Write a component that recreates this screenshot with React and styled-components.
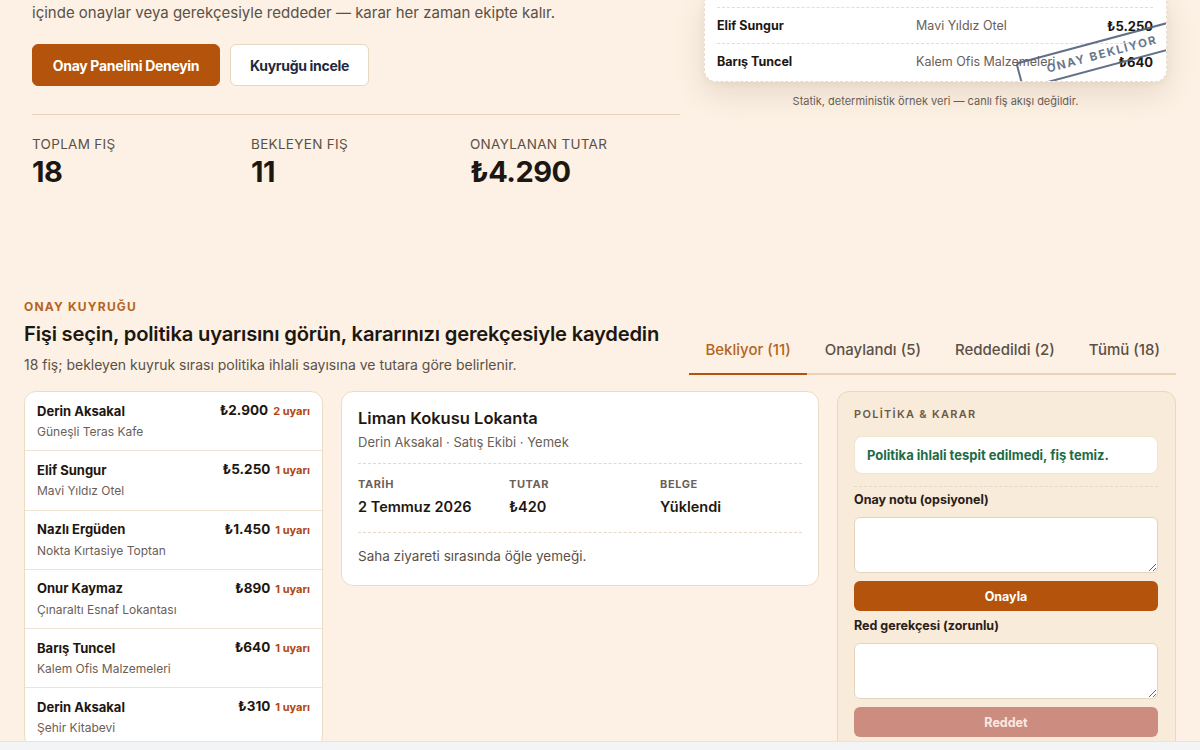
import React from "react";
import styled, { createGlobalStyle } from "styled-components";

const Global = createGlobalStyle`
  * { box-sizing: border-box; }
  html, body { margin: 0; padding: 0; }
  body {
    background: #fcf1e4;
    font-family: Inter, "Noto Sans", sans-serif;
    color: #1d1712;
    overflow: hidden;
  }
`;

const Page = styled.div`
  min-height: 750px;
`;

const Hero = styled.section`
  display: grid;
  grid-template-columns: minmax(0, 1fr) 463px;
  gap: 24px;
  padding: 0 33px 0 32px;
  align-items: start;
`;

const HeroLeft = styled.div`
  display: flex;
  flex-direction: column;
  min-width: 0;
`;

const Lead = styled.p`
  margin: 0;
  font-size: 15px;
  line-height: 25px;
  color: #5b5047;
`;

const ButtonRow = styled.div`
  display: flex;
  gap: 10px;
  margin-top: 19px;
`;

const HeroButton = styled.button`
  height: 42px;
  padding: 0;
  border-radius: 6px;
  font-family: Inter, sans-serif;
  font-size: 14px;
  font-weight: 700;
  letter-spacing: -0.3px;
  white-space: nowrap;
  cursor: pointer;
  border: 1px solid ${(p) => (p.$primary ? "#b4530c" : "#e7d6c1")};
  background: ${(p) => (p.$primary ? "#b4530c" : "#ffffff")};
  color: ${(p) => (p.$primary ? "#ffffff" : "#1f2a40")};
  width: ${(p) => p.$w}px;
`;

const Divider = styled.hr`
  border: 0;
  border-top: 1px solid #e6d4bd;
  margin: 28px 0 0;
`;

const Stats = styled.div`
  display: grid;
  grid-template-columns: 219px 219px 1fr;
  padding-top: 19px;
`;

const Stat = styled.div`
  display: flex;
  flex-direction: column;
`;

const StatLabel = styled.div`
  font-size: 13.5px;
  line-height: 20px;
  letter-spacing: 0.3px;
  color: #5b5047;
  text-transform: uppercase;
`;

const StatValue = styled.div`
  font-size: 29px;
  line-height: 36px;
  font-weight: 700;
  letter-spacing: -0.5px;
  color: #1d1712;
`;

const HeroRight = styled.div`
  display: flex;
  flex-direction: column;
  align-items: stretch;
`;

const ReceiptCard = styled.div`
  position: relative;
  overflow: hidden;
  margin-top: -8px;
  background: #ffffff;
  border: 1px dashed #e9dccb;
  border-radius: 12px;
  padding: 14px 13px 2px 12px;
  box-shadow: 0 12px 30px rgba(110, 80, 40, 0.14), 0 2px 6px rgba(110, 80, 40, 0.06);
`;

const ReceiptRow = styled.div`
  display: grid;
  grid-template-columns: 196px 1fr auto;
  align-items: center;
  height: 36px;
  font-size: 12.5px;
  border-top: 1px dashed #e6dccf;
`;

const RName = styled.span`
  font-weight: 700;
  color: #1d1712;
`;

const RMerchant = styled.span`
  color: #6a6057;
  padding-left: 3px;
`;

const RAmount = styled.span`
  font-weight: 700;
  font-size: 13px;
  color: #1d1712;
`;

const Stamp = styled.div`
  position: absolute;
  left: 311px;
  top: 47px;
  width: 172px;
  height: 28px;
  border: 2px solid #52627a;
  border-radius: 4px;
  transform: rotate(-15deg);
  display: flex;
  align-items: center;
  justify-content: center;
  font-size: 11.5px;
  font-weight: 700;
  letter-spacing: 1.6px;
  color: #5a6a82;
  opacity: 0.9;
`;

const Caption = styled.div`
  margin-top: 11px;
  text-align: center;
  font-size: 11px;
  line-height: 16px;
  color: #6a6057;
`;

const Queue = styled.section`
  padding: 109px 24px 0;
`;

const QueueHeader = styled.div`
  display: flex;
  justify-content: space-between;
  align-items: flex-end;
`;

const HeaderText = styled.div`
  display: flex;
  flex-direction: column;
`;

const Eyebrow = styled.div`
  font-size: 12px;
  line-height: 16px;
  font-weight: 700;
  letter-spacing: 1.2px;
  color: #b4651f;
`;

const Title = styled.h2`
  margin: 5px 0 0;
  font-size: 20.2px;
  line-height: 28px;
  font-weight: 600;
  letter-spacing: -0.2px;
  color: #1d1712;
`;

const Sub = styled.p`
  margin: 7px 0 0;
  font-size: 14px;
  line-height: 20px;
  color: #5b5047;
`;

const Tabs = styled.div`
  display: flex;
  gap: 2px;
  border-bottom: 2px solid #ead4b4;
`;

const Tab = styled.button`
  background: none;
  border: 0;
  border-bottom: 2px solid ${(p) => (p.$active ? "#b4530c" : "transparent")};
  margin-bottom: -2px;
  padding: 12px 16px 12px;
  font-family: Inter, sans-serif;
  font-size: 15px;
  line-height: 22px;
  font-weight: 500;
  color: ${(p) => (p.$active ? "#b4651f" : "#5b5047")};
  cursor: pointer;
`;

const Grid = styled.div`
  display: grid;
  grid-template-columns: 299px minmax(0, 1fr) 339px;
  gap: 18px;
  margin-top: 16px;
  align-items: start;
`;

const ListCard = styled.div`
  background: #ffffff;
  border: 1px solid #ecdcc6;
  border-radius: 12px;
  overflow: hidden;
`;

const ListRow = styled.div`
  display: flex;
  flex-direction: column;
  gap: 4px;
  padding: 9px 12px 10.25px;
  border-top: ${(p) => (p.$first ? "0" : "1px solid #efe3d3")};
`;

const ListTop = styled.div`
  display: flex;
  align-items: center;
  justify-content: space-between;
  line-height: 18px;
`;

const ListName = styled.span`
  font-size: 13px;
  font-weight: 700;
  color: #1d1712;
`;

const ListRight = styled.span`
  display: flex;
  align-items: baseline;
  gap: 5px;
`;

const ListAmount = styled.span`
  font-size: 13.5px;
  font-weight: 700;
  color: #1d1712;
`;

const Warn = styled.span`
  font-size: 11px;
  font-weight: 700;
  color: #b0480f;
`;

const ListMerchant = styled.span`
  font-size: 12px;
  line-height: 16px;
  color: #6a6057;
`;

const DetailCard = styled.div`
  background: #ffffff;
  border: 1px solid #ecdcc6;
  border-radius: 12px;
  padding: 14px 16px 19px;
`;

const DetailTitle = styled.h3`
  margin: 0;
  font-size: 16.5px;
  line-height: 24px;
  font-weight: 600;
  color: #1d1712;
`;

const DetailMeta = styled.div`
  margin-top: 3px;
  font-size: 13px;
  line-height: 18px;
  color: #6a6057;
`;

const Dashed = styled.div`
  border-top: 1px dashed #e6d8c4;
  margin: ${(p) => p.$m || "0"};
`;

const Facts = styled.div`
  display: grid;
  grid-template-columns: 151px 151px 1fr;
  padding: 13px 0 15px;
`;

const Fact = styled.div`
  display: flex;
  flex-direction: column;
  gap: 6px;
`;

const FactLabel = styled.div`
  font-size: 11px;
  line-height: 14px;
  font-weight: 700;
  letter-spacing: 0.6px;
  color: #6a6057;
`;

const FactValue = styled.div`
  font-size: 14.5px;
  line-height: 20px;
  font-weight: 600;
  color: #1d1712;
`;

const Note = styled.p`
  margin: 13px 0 0;
  font-size: 13.5px;
  line-height: 20px;
  color: #5b5047;
`;

const Panel = styled.div`
  background: #f8ebd9;
  border: 1px solid #ebd7bb;
  border-radius: 12px;
  padding: 15px 17px 20px 16px;
  display: flex;
  flex-direction: column;
  min-height: 380px;
`;

const PanelTitle = styled.div`
  font-size: 11px;
  line-height: 14px;
  font-weight: 600;
  letter-spacing: 1.3px;
  color: #6b5a48;
`;

const Notice = styled.div`
  margin-top: 15px;
  height: 38px;
  display: flex;
  align-items: center;
  padding: 0 12px;
  background: #ffffff;
  border: 1px solid #f1e4d2;
  border-radius: 8px;
  font-size: 13px;
  font-weight: 700;
  color: #1e6b47;
`;

const FieldLabel = styled.label`
  display: block;
  margin-top: ${(p) => p.$mt}px;
  font-size: 12.5px;
  line-height: 16px;
  font-weight: 700;
  color: #2a2018;
`;

const Area = styled.textarea`
  display: block;
  margin-top: 9px;
  width: 100%;
  height: 56px;
  border: 1px solid #e3d4c0;
  border-radius: 6px;
  background: #ffffff;
  font-family: Inter, sans-serif;
  font-size: 13px;
  padding: 8px 10px;
  resize: vertical;
`;

const ActionButton = styled.button`
  margin-top: 8px;
  height: 30px;
  width: 100%;
  border: 0;
  border-radius: 6px;
  font-family: Inter, sans-serif;
  font-size: 12.5px;
  font-weight: 700;
  background: ${(p) => (p.$danger ? "#cc8d80" : "#b4530c")};
  color: ${(p) => (p.$danger ? "#f8e9e4" : "#ffffff")};
  cursor: ${(p) => (p.$danger ? "not-allowed" : "pointer")};
`;

const BottomBar = styled.div`
  position: fixed;
  left: 0;
  right: 0;
  bottom: 0;
  height: 9px;
  background: #f3f4f6;
  border-top: 1px solid #e3e4e6;
`;

const receipts = [
  { name: "Elif Sungur", merchant: "Mavi Yıldız Otel", amount: "₺5.250" },
  { name: "Barış Tuncel", merchant: "Kalem Ofis Malzemeleri", amount: "₺640" },
];

const queue = [
  { name: "Derin Aksakal", merchant: "Güneşli Teras Kafe", amount: "₺2.900", warn: "2 uyarı" },
  { name: "Elif Sungur", merchant: "Mavi Yıldız Otel", amount: "₺5.250", warn: "1 uyarı" },
  { name: "Nazlı Ergüden", merchant: "Nokta Kırtasiye Toptan", amount: "₺1.450", warn: "1 uyarı" },
  { name: "Onur Kaymaz", merchant: "Çınaraltı Esnaf Lokantası", amount: "₺890", warn: "1 uyarı" },
  { name: "Barış Tuncel", merchant: "Kalem Ofis Malzemeleri", amount: "₺640", warn: "1 uyarı" },
  { name: "Derin Aksakal", merchant: "Şehir Kitabevi", amount: "₺310", warn: "1 uyarı" },
];

const tabs = [
  { label: "Bekliyor (11)", active: true },
  { label: "Onaylandı (5)" },
  { label: "Reddedildi (2)" },
  { label: "Tümü (18)" },
];

export default function App() {
  return (
    <Page>
      <Global />
      <Hero>
        <HeroLeft>
          <Lead>içinde onaylar veya gerekçesiyle reddeder — karar her zaman ekipte kalır.</Lead>
          <ButtonRow>
            <HeroButton $primary $w={188}>Onay Panelini Deneyin</HeroButton>
            <HeroButton $w={139}>Kuyruğu incele</HeroButton>
          </ButtonRow>
          <Divider />
          <Stats>
            <Stat>
              <StatLabel>Toplam fiş</StatLabel>
              <StatValue>18</StatValue>
            </Stat>
            <Stat>
              <StatLabel>Bekleyen fiş</StatLabel>
              <StatValue>11</StatValue>
            </Stat>
            <Stat>
              <StatLabel>Onaylanan tutar</StatLabel>
              <StatValue>₺4.290</StatValue>
            </Stat>
          </Stats>
        </HeroLeft>
        <HeroRight>
          <ReceiptCard>
            {receipts.map((r, i) => (
              <ReceiptRow key={i}>
                <RName>{r.name}</RName>
                <RMerchant>{r.merchant}</RMerchant>
                <RAmount>{r.amount}</RAmount>
              </ReceiptRow>
            ))}
            <Stamp>ONAY BEKLİYOR</Stamp>
          </ReceiptCard>
          <Caption>Statik, deterministik örnek veri — canlı fiş akışı değildir.</Caption>
        </HeroRight>
      </Hero>

      <Queue>
        <QueueHeader>
          <HeaderText>
            <Eyebrow>ONAY KUYRUĞU</Eyebrow>
            <Title>Fişi seçin, politika uyarısını görün, kararınızı gerekçesiyle kaydedin</Title>
            <Sub>18 fiş; bekleyen kuyruk sırası politika ihlali sayısına ve tutara göre belirlenir.</Sub>
          </HeaderText>
          <Tabs>
            {tabs.map((t) => (
              <Tab key={t.label} $active={t.active}>{t.label}</Tab>
            ))}
          </Tabs>
        </QueueHeader>

        <Grid>
          <ListCard>
            {queue.map((q, i) => (
              <ListRow key={i} $first={i === 0}>
                <ListTop>
                  <ListName>{q.name}</ListName>
                  <ListRight>
                    <ListAmount>{q.amount}</ListAmount>
                    <Warn>{q.warn}</Warn>
                  </ListRight>
                </ListTop>
                <ListMerchant>{q.merchant}</ListMerchant>
              </ListRow>
            ))}
          </ListCard>

          <DetailCard>
            <DetailTitle>Liman Kokusu Lokanta</DetailTitle>
            <DetailMeta>Derin Aksakal · Satış Ekibi · Yemek</DetailMeta>
            <Dashed $m="12px 0 0" />
            <Facts>
              <Fact>
                <FactLabel>TARİH</FactLabel>
                <FactValue>2 Temmuz 2026</FactValue>
              </Fact>
              <Fact>
                <FactLabel>TUTAR</FactLabel>
                <FactValue>₺420</FactValue>
              </Fact>
              <Fact>
                <FactLabel>BELGE</FactLabel>
                <FactValue>Yüklendi</FactValue>
              </Fact>
            </Facts>
            <Dashed />
            <Note>Saha ziyareti sırasında öğle yemeği.</Note>
          </DetailCard>

          <Panel>
            <PanelTitle>POLİTİKA &amp; KARAR</PanelTitle>
            <Notice>Politika ihlali tespit edilmedi, fiş temiz.</Notice>
            <Dashed $m="12px 0 0" />
            <FieldLabel $mt={5}>Onay notu (opsiyonel)</FieldLabel>
            <Area />
            <ActionButton>Onayla</ActionButton>
            <FieldLabel $mt={7}>Red gerekçesi (zorunlu)</FieldLabel>
            <Area />
            <ActionButton $danger disabled>Reddet</ActionButton>
          </Panel>
        </Grid>
      </Queue>
      <BottomBar />
    </Page>
  );
}
